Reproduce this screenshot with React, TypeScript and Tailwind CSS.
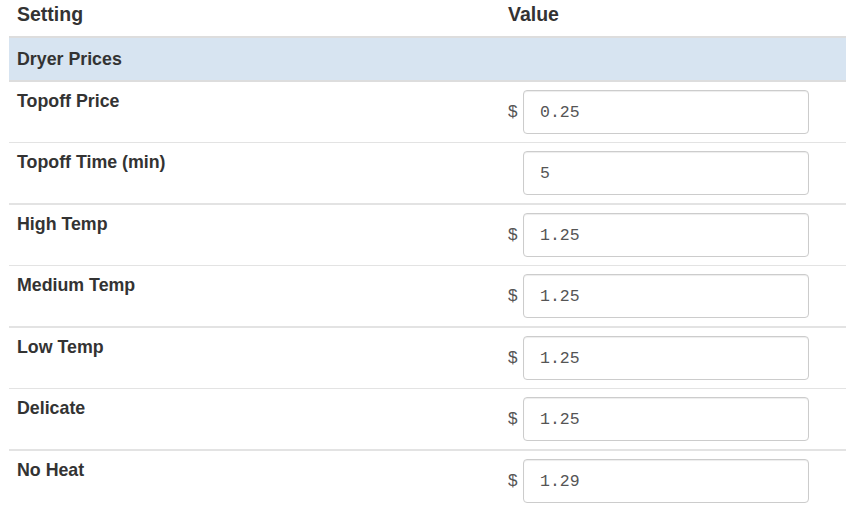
import React from 'react';

type Row = { label: string; value: string; dollar: boolean };

const rows: Row[] = [
  { label: 'Topoff Price', value: '0.25', dollar: true },
  { label: 'Topoff Time (min)', value: '5', dollar: false },
  { label: 'High Temp', value: '1.25', dollar: true },
  { label: 'Medium Temp', value: '1.25', dollar: true },
  { label: 'Low Temp', value: '1.25', dollar: true },
  { label: 'Delicate', value: '1.25', dollar: true },
  { label: 'No Heat', value: '1.29', dollar: true },
];

const App: React.FC = () => {
  return (
    <div className="w-[846px] h-[506px] overflow-hidden bg-white pl-[9px] text-[#333] font-['Liberation_Sans',Arial,sans-serif]">
      {/* header */}
      <div className="flex h-[38px] border-b-2 border-[#dddddd] text-[19.5px] font-bold leading-[28px]">
        <div className="w-[491px] px-2">Setting</div>
        <div className="flex-1 px-2">Value</div>
      </div>

      {/* section */}
      <div className="flex h-[44px] items-center border-b-2 border-[#dddddd] bg-[#d7e4f1] px-2 text-[17.8px] font-bold">
        Dryer Prices
      </div>

      {rows.map((row, i) => (
        <div
          key={row.label}
          className={`flex h-[60px] box-content ${
            i === rows.length - 1 ? '' : i % 2 === 0 ? 'border-b border-[#e3e3e3]' : 'border-b-2 border-[#e3e3e3]'
          }`}
        >
          <div className="w-[491px] px-2 pt-[7px] text-[17.8px] font-bold leading-[25px]">{row.label}</div>
          <div className="flex flex-1 items-center px-2">
            <span className="w-[15px] text-[17px] text-[#555]">{row.dollar ? '$' : ''}</span>
            <input
              readOnly
              value={row.value}
              className="h-[44px] w-[286px] rounded-[4px] border border-[#cccccc] bg-white px-4 font-['Liberation_Mono','Courier_New',monospace] text-[16.5px] text-[#555] shadow-[inset_0_1px_1px_rgba(0,0,0,0.075)] outline-none"
            />
          </div>
        </div>
      ))}
    </div>
  );
};

export default App;
